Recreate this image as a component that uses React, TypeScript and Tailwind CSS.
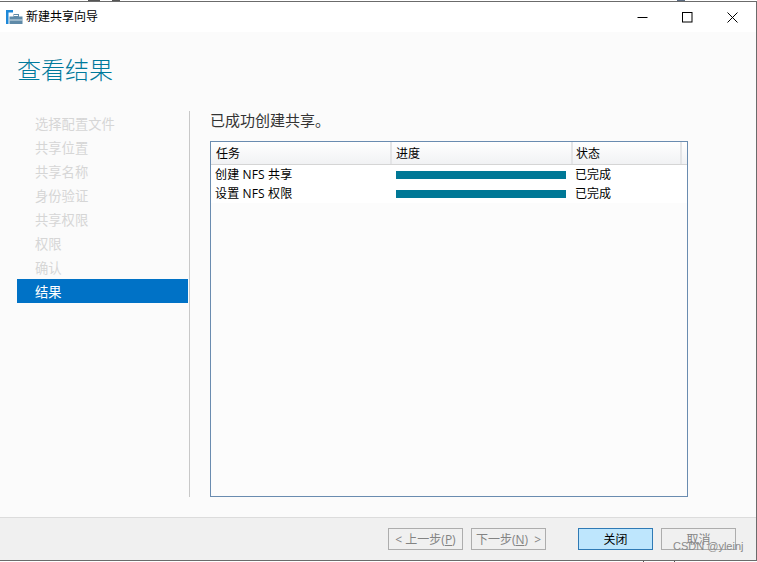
function WinBtn({ children, label }: { children: React.ReactNode; label: string }) {
  return (
    <button aria-label={label} className="w-[45px] h-[31px] flex items-center justify-center">
      {children}
    </button>
  );
}

function FootBtn({ children, active, cls }: { children: React.ReactNode; active?: boolean; cls?: string }) {
  return (
    <button
      className={
        active
          ? "w-[75px] h-[22px] pt-[2px] border border-[#2f7ab5] bg-[#bee6fd] text-black text-[12px] flex items-center justify-center whitespace-pre " + (cls ?? "")
          : "w-[75px] h-[22px] pt-[2px] border border-[#adadad] bg-[#f0f0f0] text-[#838383] text-[12px] flex items-center justify-center whitespace-pre " + (cls ?? "")
      }
    >
      {children}
    </button>
  );
}

const steps = ["选择配置文件", "共享位置", "共享名称", "身份验证", "共享权限", "权限", "确认"];

function Row({ name }: { name: string }) {
  return (
    <div className="flex h-[19px] items-center bg-white text-[12px] text-black">
      <div className="w-[180px] pl-[4px] shrink-0 whitespace-nowrap tracking-[0.15px]">{name}</div>
      <div className="w-[181px] pl-[5px] shrink-0">
        <div className="w-[170px] h-[8px] bg-[#007896]" />
      </div>
      <div className="pl-[3px]">已完成</div>
    </div>
  );
}

export default function App() {
  return (
    <div className="relative w-[757px] h-[562px] bg-white overflow-hidden font-['Open_Sans','Noto_Sans_CJK_SC',sans-serif]">
      <div className="mt-px h-[560px] w-[757px] border-t border-r border-b border-[#6b6b6b] flex flex-col bg-[#fbfbfb]">
        <div className="h-[30px] bg-white flex items-center shrink-0">
          <svg width="17" height="15" viewBox="0 0 17 15" className="ml-[6px] shrink-0">
            <rect x="0" y="0" width="7" height="2.5" fill="#1e88d8" />
            <rect x="0" y="0" width="2.5" height="14" fill="#1e88d8" />
            <rect x="3.5" y="6.5" width="13" height="7.5" fill="#5f8aa8" />
            <rect x="3.5" y="9.5" width="13" height="1" fill="#d8e4ec" />
            <rect x="8" y="4.5" width="4.5" height="2" fill="none" stroke="#5f8aa8" strokeWidth="1" />
          </svg>
          <span className="ml-[3px] text-[12px] text-black">新建共享向导</span>
          <div className="ml-auto flex pr-[1px]">
            <WinBtn label="minimize">
              <svg width="11" height="11" viewBox="0 0 11 11"><rect x="0.5" y="5" width="10" height="1" fill="#000" /></svg>
            </WinBtn>
            <WinBtn label="maximize">
              <svg width="11" height="11" viewBox="0 0 11 11"><rect x="0.5" y="0.5" width="9.5" height="9.5" fill="none" stroke="#000" strokeWidth="1" /></svg>
            </WinBtn>
            <WinBtn label="close">
              <svg width="11" height="11" viewBox="0 0 11 11"><path d="M0.5 0.5L10.5 10.5M10.5 0.5L0.5 10.5" stroke="#000" strokeWidth="1" fill="none" /></svg>
            </WinBtn>
          </div>
        </div>

        <div className="flex-1 min-h-0 flex flex-col">
          <h1 className="ml-[17px] mt-[19px] h-[38px] leading-[38px] text-[24px] font-light text-[#007a9c]">查看结果</h1>
          <div className="flex mt-[22px] h-[386px]">
            <div className="ml-[17px] w-[171px] text-[13.3px] shrink-0">
              {steps.map((s) => (
                <div key={s} className="h-[24px] pt-px leading-[24px] pl-[18px] text-[#d6d6d6]">{s}</div>
              ))}
              <div className="h-[24px] pt-px leading-[24px] pl-[18px] bg-[#0072c6] text-white">结果</div>
            </div>
            <div className="ml-[1px] w-px h-[386px] bg-[#c8c8c8] shrink-0" />
            <div className="ml-[20px] w-[478px] flex flex-col shrink-0">
              <div className="h-[20px] leading-[18px] text-[15px] text-[#333] whitespace-nowrap">已成功创建共享。</div>
              <div className="mt-[10px] h-[356px] border border-[#6a8cb0] bg-[#fcfcfc]">
                <div className="flex h-[23px] border-b border-[#d5d5d5] bg-gradient-to-b from-white to-[#f1f2f4] text-[12px] text-black">
                  <div className="w-[181px] pl-[5px] border-r-2 border-[#e4e5e7] leading-[24px]">任务</div>
                  <div className="w-[181px] pl-[4px] border-r-2 border-[#e4e5e7] leading-[24px]">进度</div>
                  <div className="w-[109px] pl-[3px] border-r-2 border-[#e4e5e7] leading-[24px]">状态</div>
                </div>
                <Row name="创建 NFS 共享" />
                <Row name="设置 NFS 权限" />
              </div>
            </div>
          </div>
        </div>

        <div className="h-[43px] shrink-0 border-t border-[#dcdcdc] bg-[#f0f0f0] flex items-start pt-[10px] pl-[388px]">
          <FootBtn>&lt; 上一步(<u>P</u>)</FootBtn>
          <FootBtn cls="ml-[8px]">下一步(<u>N</u>)  &gt;</FootBtn>
          <FootBtn active cls="ml-[32px]">关闭</FootBtn>
          <FootBtn cls="ml-[8px]">取消</FootBtn>
        </div>
      </div>
      <span className="absolute left-[673px] top-[538px] text-[11px] leading-[16px] text-[#8a8a8a] font-['Liberation_Sans',sans-serif] whitespace-nowrap">CSDN @yleinj</span>
      <span className="absolute left-[88px] top-0 w-[12px] h-px bg-[#555]" />
      <span className="absolute left-[112px] top-0 w-[8px] h-px bg-[#555]" />
      <span className="absolute left-[677px] top-0 w-[8px] h-px bg-[#5a6a80]" />
      <span className="absolute left-[643px] top-[561px] w-px h-px bg-[#555]" />
      <span className="absolute left-[674px] top-[561px] w-px h-px bg-[#555]" />
    </div>
  );
}
